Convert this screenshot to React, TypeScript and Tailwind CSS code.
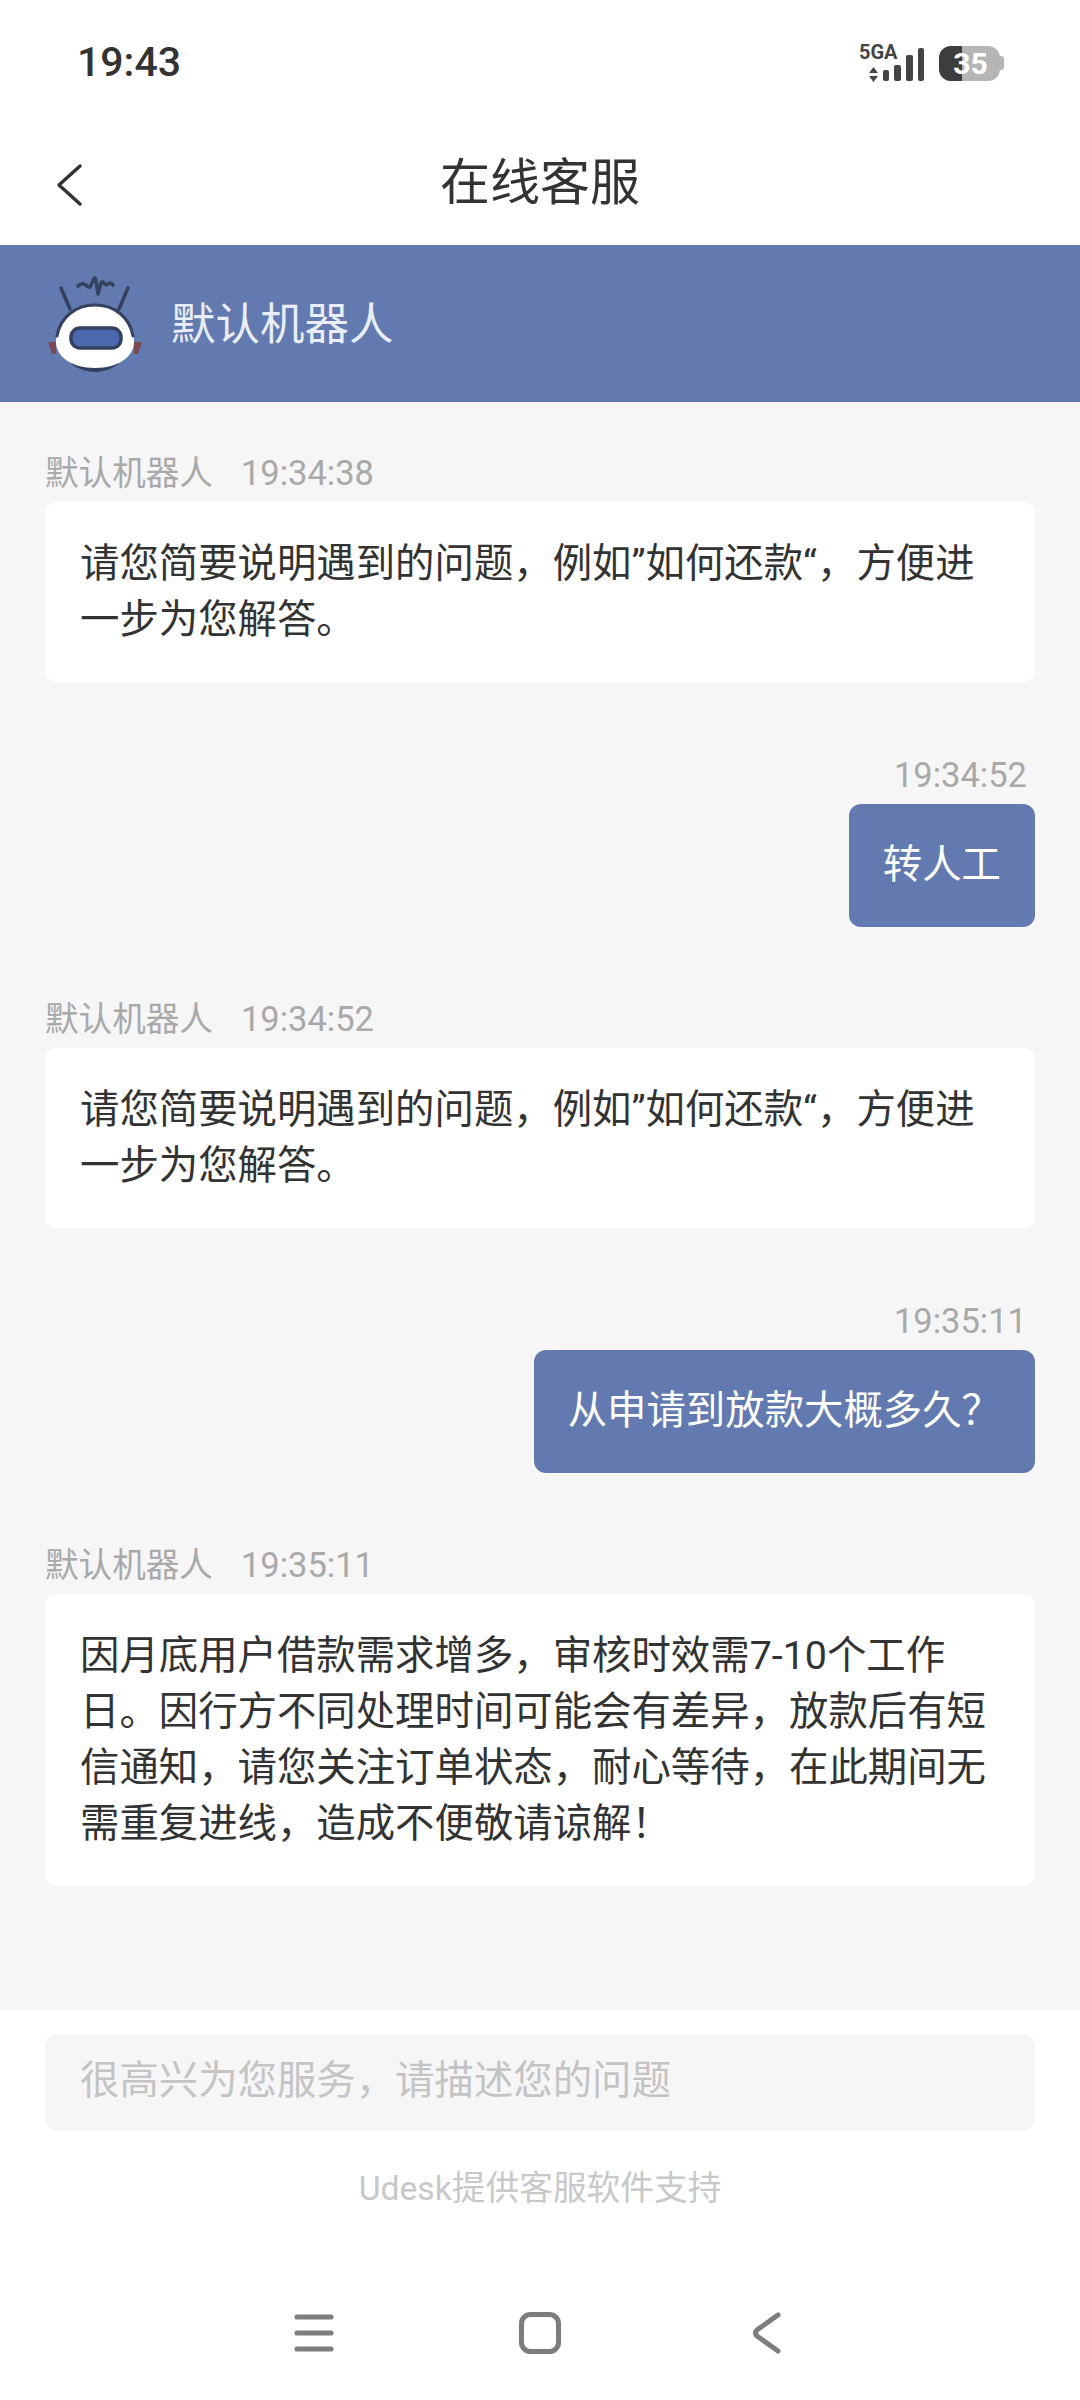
const cjk = "font-['Roboto','Noto_Sans_CJK_SC',sans-serif]";

function RobotLogo() {
  return (
    <svg width="96" height="100" viewBox="0 0 96 100" fill="none">
      <path d="M14 14 L23 35 M81 14 L72 35" stroke="#33415f" strokeWidth="3.5" strokeLinecap="round" />
      <path d="M31 12 q4 -4 8 -1 q3 3 4 2 l3 -6 q2 -6 3 0 l2 13 l3 -11 q2 -3 3 0 q2 3 4 1 q3 -2 5 1" stroke="#33415f" strokeWidth="3.5" strokeLinejoin="round" strokeLinecap="round" />
      <path d="M1 68 h8 v12 h-4z" fill="#7a4a50" />
      <path d="M95 68 h-8 v12 h4z" fill="#7a4a50" />
      <path d="M24 90 Q48 106 72 90 L66 84 H30Z" fill="#33415f" />
      <path d="M48 31 C24 31 9 48 9 68 C9 82 24 94 48 94 C72 94 87 82 87 68 C87 48 72 31 48 31Z" fill="#ffffff" />
      <path d="M10 62 C13 44 28 31 48 31 C68 31 83 44 86 62" stroke="#33415f" strokeWidth="3" strokeLinecap="round" />
      <rect x="24" y="54" width="50" height="20" rx="9" fill="#4c69b0" stroke="#33415f" strokeWidth="3.5" />
    </svg>
  );
}

function BotMessage({ time, lines }: { time: string; lines: string[] }) {
  return (
    <div className="flex flex-col">
      <div className="flex h-[28px] items-center gap-[28px] pt-[6px] text-[33.6px] text-[#a9a9a9]">
        <span>默认机器人</span>
        <span className="text-[34.5px]">{time}</span>
      </div>
      <div className="mt-[17px] rounded-[12px] bg-white px-[35px] py-[34px] text-[39.4px] leading-[56px] text-[#333333]">
        {lines.map((line) => (
          <div key={line}>{line}</div>
        ))}
      </div>
    </div>
  );
}

function UserMessage({ time, text }: { time: string; text: string }) {
  return (
    <div className="flex flex-col items-end">
      <div className="flex h-[28px] items-center pr-[8px] pt-[6px] text-[34.5px] text-[#a9a9a9]">{time}</div>
      <div className="mt-[17px] flex h-[123px] items-center rounded-[12px] bg-[#637ab0] px-[34px] text-[39.4px] text-white">
        {text}
      </div>
    </div>
  );
}

export default function App() {
  return (
    <div className={`${cjk} flex h-[2400px] w-[1080px] flex-col overflow-hidden bg-[#f6f6f6]`}>
      {/* Status bar */}
      <div className="flex h-[122px] items-center justify-between bg-white pl-[77px] pr-[76px] pt-[4px]">
        <span className="text-[41px] font-medium text-[#333333]">19:43</span>
        <div className="flex items-center gap-[14px]">
          <div className="relative h-[38px] w-[66px]">
            <span className="absolute left-0 top-0 text-[20px] leading-[16px] font-bold text-[#444444]">5GA</span>
            <svg className="absolute left-0 top-0" width="66" height="38" viewBox="0 0 66 38">
              <path d="M10 29 l4.5 -6 l4.5 6z M10 32 l4.5 6 l4.5 -6z" fill="#444444" />
              <rect x="24" y="26" width="6" height="11" rx="2" fill="#444444" />
              <rect x="35" y="21" width="7" height="16" rx="2" fill="#444444" />
              <rect x="47" y="11" width="7" height="26" rx="2" fill="#444444" />
              <rect x="59" y="4" width="6" height="33" rx="2" fill="#444444" />
            </svg>
          </div>
          <div className="flex items-center">
            <div className="relative flex h-[35px] w-[61px] overflow-hidden rounded-[12px] bg-[#b5b5b5]">
              <div className="h-full w-[23px] bg-[#3d3d3d]" />
              <span className="absolute inset-0 flex items-center justify-center pl-[2px] text-[30px] font-bold text-white">35</span>
            </div>
            <div className="h-[14px] w-[4px] rounded-r-[3px] bg-[#b5b5b5]" />
          </div>
        </div>
      </div>

      {/* Title bar */}
      <div className="relative flex h-[123px] items-center justify-center bg-white">
        <svg className="absolute left-[54px] top-[41px]" width="30" height="44" viewBox="0 0 30 44" fill="none">
          <path d="M26 3 L5 22 L26 41" stroke="#333333" strokeWidth="3.5" strokeLinecap="round" strokeLinejoin="round" />
        </svg>
        <span className="text-[50px] text-[#333333]">在线客服</span>
      </div>

      {/* Robot banner */}
      <div className="flex h-[157px] items-center gap-[28px] bg-[#637ab0] pl-[47px]">
        <RobotLogo />
        <span className="pt-[4px] text-[44.5px] text-[#e8edf8]">默认机器人</span>
      </div>

      {/* Messages */}
      <div className="flex flex-1 flex-col gap-[76.5px] px-[45px] pt-[55px]">
        <BotMessage time="19:34:38" lines={["请您简要说明遇到的问题，例如”如何还款“，方便进", "一步为您解答。"]} />
        <UserMessage time="19:34:52" text="转人工" />
        <BotMessage time="19:34:52" lines={["请您简要说明遇到的问题，例如”如何还款“，方便进", "一步为您解答。"]} />
        <UserMessage time="19:35:11" text="从申请到放款大概多久？" />
        <BotMessage
          time="19:35:11"
          lines={[
            "因月底用户借款需求增多，审核时效需7-10个工作",
            "日。因行方不同处理时间可能会有差异，放款后有短",
            "信通知，请您关注订单状态，耐心等待，在此期间无",
            "需重复进线，造成不便敬请谅解！",
          ]}
        />
      </div>

      {/* Input and footer */}
      <div className="flex h-[390px] flex-col bg-white px-[45px] pt-[24px]">
        <div className="flex h-[97px] items-center rounded-[12px] bg-[#f6f6f6] px-[35px] pb-[4px] text-[39.4px] text-[#c4c4c4]">
          很高兴为您服务，请描述您的问题
        </div>
        <div className="mt-[33px] text-center text-[33.7px] text-[#c8c8c8]">Udesk提供客服软件支持</div>
        <div className="mt-auto flex items-center pb-[46px] pl-[249px]">
          <svg width="40" height="38" viewBox="0 0 40 38" fill="none">
            <path d="M3 3 H37 M3 19 H37 M3 35 H37" stroke="#7d7d7d" strokeWidth="5" strokeLinecap="round" />
          </svg>
          <svg className="ml-[185px]" width="42" height="42" viewBox="0 0 42 42" fill="none">
            <rect x="2.5" y="2.5" width="37" height="37" rx="9" stroke="#7d7d7d" strokeWidth="5" />
          </svg>
          <svg className="ml-[192px]" width="28" height="42" viewBox="0 0 28 42" fill="none">
            <path d="M25 3 L4 18 Q1 21 4 24 L25 39" stroke="#7d7d7d" strokeWidth="5" strokeLinecap="round" />
          </svg>
        </div>
      </div>
    </div>
  );
}
